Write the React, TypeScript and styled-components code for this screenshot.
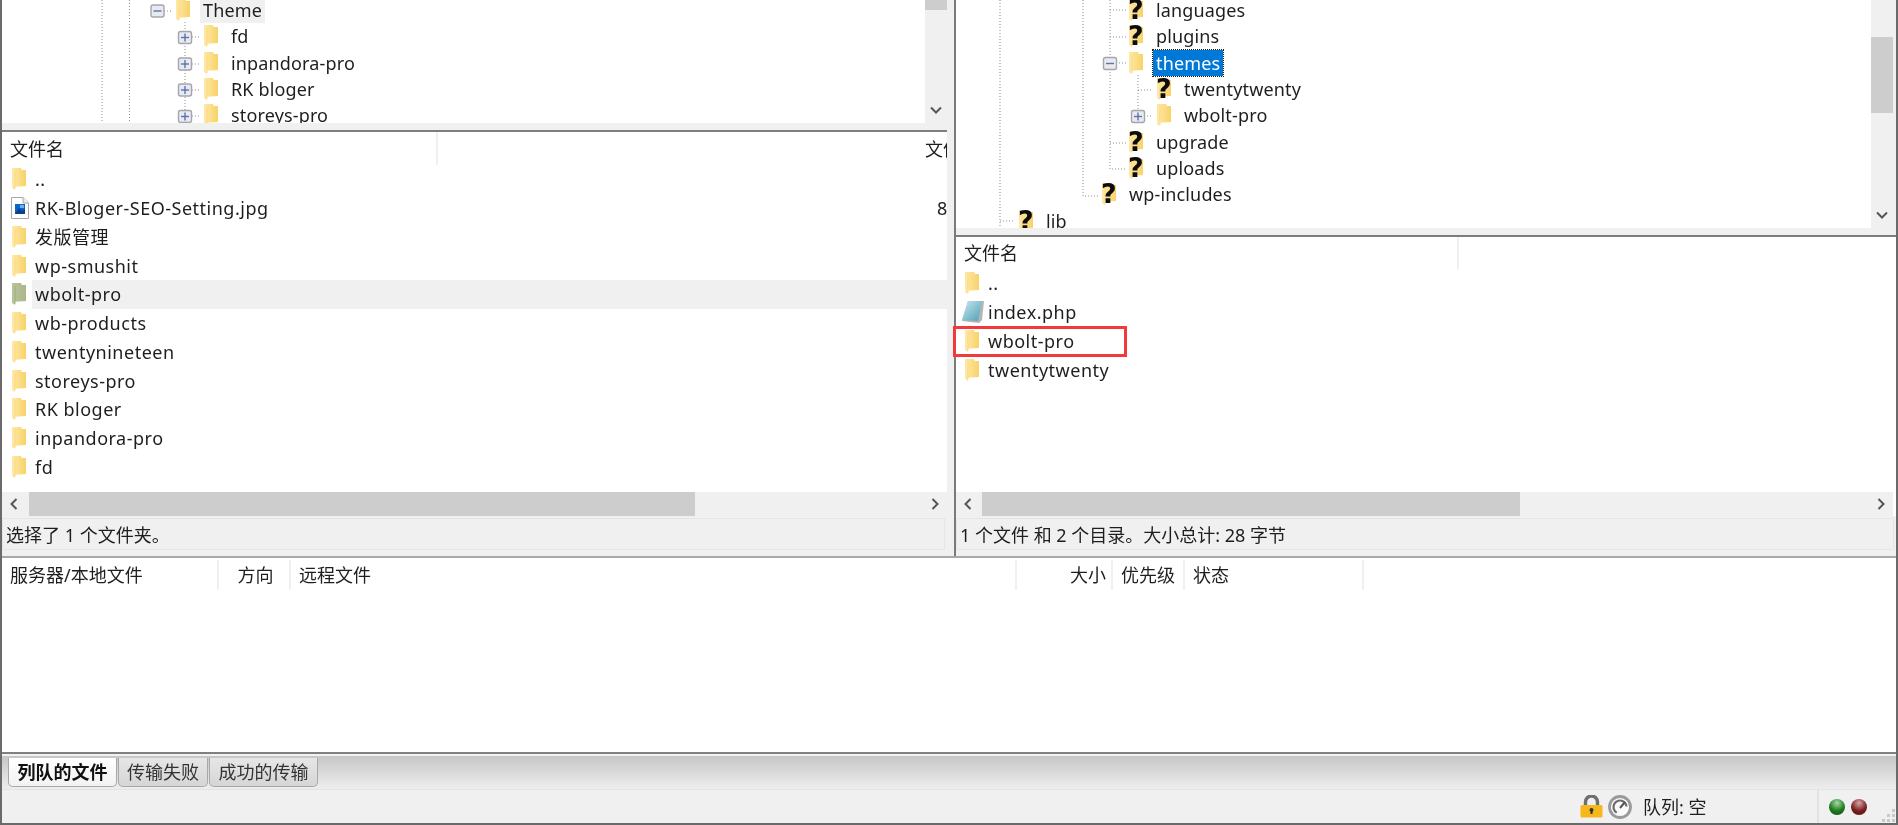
import React from "react";
import styled, { createGlobalStyle } from "styled-components";

const FONT = `"Noto Sans", "Noto Sans CJK SC", sans-serif`;

const Global = createGlobalStyle`
  html, body { margin: 0; padding: 0; background: #f0f0f0; }
  * { box-sizing: border-box; }
`;

const Window = styled.div`
  width: 1898px;
  height: 825px;
  display: flex;
  flex-direction: column;
  overflow: hidden;
  background: #f0f0f0;
  border-left: 2px solid #6a6a6a;
  border-right: 2px solid #6a6a6a;
  border-bottom: 2px solid #6a6a6a;
  font: 18px/1 ${FONT};
  color: #1e1e1e;
  filter: blur(0.45px);
`;

const Panes = styled.div`
  height: 556px;
  flex: none;
  display: grid;
  grid-template-columns: 945px 1fr;
  column-gap: 7px;
`;

const Side = styled.div<{ $divider?: boolean }>`
  display: flex;
  flex-direction: column;
  min-width: 0;
  border-left: ${(p) => (p.$divider ? "2px solid #7a7a7a" : "0")};
`;

const TreePane = styled.div<{ $h: number }>`
  height: ${(p) => p.$h}px;
  flex: none;
  display: flex;
  overflow: hidden;
  background: #fff;
`;

const TreeBody = styled.div`
  position: relative;
  flex: 1;
  min-width: 0;
  overflow: hidden;
`;

const TreeLines = styled.svg`
  position: absolute;
  inset: 0;
  width: 100%;
  height: 100%;
`;

const TreeList = styled.div`
  position: relative;
  margin-top: -3px;
`;

const TreeRow = styled.div<{ $x: number }>`
  height: 26.33px;
  display: flex;
  align-items: center;
  padding-left: ${(p) => p.$x}px;
`;

const TreeLabel = styled.span<{ $state?: "selected" | "soft" }>`
  margin-left: 10px;
  padding: 0 3px;
  height: 26px;
  display: flex;
  align-items: center;
  letter-spacing: 0.15px;
  background: ${(p) =>
    p.$state === "selected" ? "#0078d7" : p.$state === "soft" ? "#f0f0f0" : "transparent"};
  color: ${(p) => (p.$state === "selected" ? "#fff" : "inherit")};
  outline: ${(p) => (p.$state === "selected" ? "1px dotted #1a1a1a" : "none")};
`;

const IconBox = styled.span`
  position: relative;
  flex: none;
  width: 14px;
  height: 22px;
  display: block;
`;

const Question = styled.span`
  position: absolute;
  left: -1px;
  top: -3px;
  font: 700 27px/27px "DejaVu Sans", "Liberation Sans", sans-serif;
  color: #0c0c0c;
`;

const VScroll = styled.div<{ $w: number; $pad: number; $thumbTop: number; $thumbH: number }>`
  position: relative;
  flex: none;
  width: ${(p) => p.$w}px;
  background: #f0f0f0;
  &::before {
    content: "";
    position: absolute;
    left: 0;
    width: ${(p) => p.$w - p.$pad}px;
    top: ${(p) => p.$thumbTop}px;
    height: ${(p) => p.$thumbH}px;
    background: #cdcdcd;
  }
`;

const ArrowSlot = styled.span<{ $bottom: number; $w: number }>`
  position: absolute;
  left: 0;
  width: ${(p) => p.$w}px;
  bottom: ${(p) => p.$bottom}px;
  display: flex;
  justify-content: center;
`;

const Sash = styled.div`
  height: 9px;
  flex: none;
  background: #f0f0f0;
  border-bottom: 2px solid #7d7d7d;
`;

const ListPane = styled.div`
  flex: 1;
  min-height: 0;
  display: flex;
  flex-direction: column;
  background: #fff;
`;

const ListHeader = styled.div<{ $h: number }>`
  height: ${(p) => p.$h}px;
  flex: none;
  display: flex;
  align-items: center;
  white-space: nowrap;
  overflow: hidden;
`;

const NameHead = styled.div<{ $w: number }>`
  width: ${(p) => p.$w}px;
  flex: none;
  height: 100%;
  padding-left: 8px;
  display: flex;
  align-items: center;
  border-right: 2px solid #f0f0f0;
`;

const SizeHead = styled.div`
  padding-left: 487px;
`;

const ListRow = styled.div<{ $x: number }>`
  height: 28.75px;
  flex: 1;
  display: flex;
  align-items: center;
  padding-left: ${(p) => p.$x}px;
  white-space: nowrap;
  overflow: hidden;
`;

const FileLabel = styled.span<{ $active?: boolean }>`
  flex: 1;
  min-width: 0;
  height: 100%;
  display: flex;
  align-items: center;
  padding-left: 3px;
  margin-left: 6px;
  letter-spacing: 0.5px;
  background: ${(p) => (p.$active ? "#f0f0f0" : "transparent")};
`;

const SizeCell = styled.span`
  position: absolute;
  right: 0;
  width: 10px;
  overflow: hidden;
`;

const RowHost = styled.div`
  position: relative;
  display: flex;
  align-items: center;
`;

const Rows = styled.div`
  flex: 1;
  min-height: 0;
  position: relative;
`;

const HighlightBox = styled.div`
  position: absolute;
  left: -3px;
  top: 57px;
  width: 174px;
  height: 31px;
  border: 3px solid #f33a3a;
`;

const HScroll = styled.div<{ $thumbStart: number; $thumbW: number; $pad: number }>`
  position: relative;
  height: 24px;
  flex: none;
  margin-right: ${(p) => p.$pad}px;
  background: #f0f0f0;
  display: flex;
  align-items: center;
  justify-content: space-between;
  padding: 0 8px;
  &::before {
    content: "";
    position: absolute;
    top: 0;
    bottom: 0;
    left: ${(p) => p.$thumbStart}px;
    width: ${(p) => p.$thumbW}px;
    background: #cdcdcd;
  }
`;

const PaneStatus = styled.div`
  height: 32px;
  margin-top: 2px;
  margin-right: 2px;
  flex: none;
  display: flex;
  align-items: center;
  padding: 1px 0 0 3px;
  background: #f0f0f0;
  border: 1px solid #e6e6e6;
  white-space: nowrap;
`;

const PaneFoot = styled.div`
  height: 6px;
  flex: none;
  background: #f0f0f0;
`;

const Queue = styled.div`
  height: 198px;
  flex: none;
  background: #fff;
  border-top: 2px solid #a8a8a8;
  border-bottom: 2px solid #808080;
  padding-top: 2px;
`;

const QueueHead = styled.div`
  height: 30px;
  display: grid;
  grid-template-columns: 217px 72px 726px 96px 72px 179px;
  align-items: stretch;
`;

const QueueCol = styled.div<{ $align?: "center" | "flex-end" }>`
  display: flex;
  align-items: center;
  justify-content: ${(p) => p.$align ?? "flex-start"};
  padding: 0 5px 0 8px;
  border-right: 2px solid #f0f0f0;
  white-space: nowrap;
`;

const TabBand = styled.div`
  height: 36px;
  flex: none;
  display: flex;
  align-items: flex-start;
  gap: 1px;
  padding: 2px 0 0 6px;
  border-top: 2px solid #f2f2f2;
  border-bottom: 1px solid #e4e4e4;
  background: linear-gradient(#c6c6c6, #eeeeee);
`;

const Tab = styled.div<{ $active?: boolean; $w: number }>`
  width: ${(p) => p.$w}px;
  height: 29px;
  display: flex;
  align-items: center;
  justify-content: center;
  border: 1px solid #a8a8a8;
  border-top: 0;
  border-radius: 0 0 5px 5px;
  font-weight: ${(p) => (p.$active ? 700 : 400)};
  color: ${(p) => (p.$active ? "#111" : "#333")};
  background: ${(p) =>
    p.$active ? "linear-gradient(#ffffff, #f2f2f2)" : "linear-gradient(#e6e6e6, #d6d6d6)"};
`;

const StatusBar = styled.div`
  flex: 1;
  min-height: 0;
  display: flex;
  align-items: center;
  background: #f0f0f0;
`;

const LockSlot = styled.span`
  margin-left: auto;
  display: flex;
  align-items: center;
  gap: 5px;
`;

const QueueText = styled.span`
  width: 174px;
  margin-left: 11px;
  white-space: nowrap;
`;

const Lights = styled.div`
  height: 100%;
  display: flex;
  align-items: center;
  gap: 6px;
  padding: 0 14px 0 10px;
  border-left: 2px solid #e2e2e2;
`;

const Led = styled.span<{ $hue: "green" | "red" }>`
  width: 16px;
  height: 16px;
  border-radius: 50%;
  background: ${(p) =>
    p.$hue === "green"
      ? "radial-gradient(circle at 50% 25%, #a6d8a6, #1f7a1f 55%, #0e4d0e)"
      : "radial-gradient(circle at 50% 25%, #d8a6a6, #7a1f1f 55%, #4d0e0e)"};
`;

const Grip = styled.svg`
  flex: none;
  align-self: flex-end;
`;

const Chevron = ({ dir }: { dir: "up" | "down" | "left" | "right" }) => {
  const d = {
    down: "M1 1.5 L6 6.5 L11 1.5",
    up: "M1 6.5 L6 1.5 L11 6.5",
    left: "M6.5 1 L1.5 6 L6.5 11",
    right: "M1.5 1 L6.5 6 L1.5 11",
  }[dir];
  const horizontal = dir === "left" || dir === "right";
  return (
    <svg
      width={horizontal ? 8 : 12}
      height={horizontal ? 12 : 8}
      viewBox={horizontal ? "0 0 8 12" : "0 0 12 8"}
      style={{ position: "relative" }}
    >
      <path d={d} fill="none" stroke="#555" strokeWidth="2" />
    </svg>
  );
};

const FolderShape = ({ tint, id }: { tint?: boolean; id: string }) => (
  <svg width="14" height="22" viewBox="0 0 14 22">
    <defs>
      <linearGradient id={id} x1="0" y1="0" x2="1" y2="0">
        <stop offset="0" stopColor={tint ? "#b9c49a" : "#ffe9a6"} />
        <stop offset="1" stopColor={tint ? "#aab68a" : "#f8d269"} />
      </linearGradient>
    </defs>
    <path d="M0 0 H9 L9.8 2 H14 V18 L3 18.8 V22 L0 20 Z" fill={`url(#${id})`} />
    <path d="M3 3 V21" stroke={tint ? "#9aa77e" : "#f7d888"} strokeWidth="0.8" />
  </svg>
);

let uid = 0;
const Folder = ({ tint }: { tint?: boolean }) => (
  <IconBox>
    <FolderShape tint={tint} id={`folder-${uid++}`} />
  </IconBox>
);

const Unknown = () => (
  <IconBox>
    <FolderShape id={`unknown-${uid++}`} />
    <Question>?</Question>
  </IconBox>
);

const ImageFile = () => (
  <IconBox>
    <svg width="18" height="22" viewBox="0 0 18 22" style={{ marginLeft: -1 }}>
      <path d="M0.5 0.5 H12 L17.5 6 V21.5 H0.5 Z" fill="#fff" stroke="#a8a8a8" />
      <path d="M12 0.5 V6 H17.5" fill="#eee" stroke="#a8a8a8" />
      <rect x="4" y="7" width="10" height="10" fill="#0b63c4" />
      <path d="M4 17 L8 11 L11 14 L14 12 V17 Z" fill="#0a3f8a" />
      <rect x="9" y="8" width="4" height="3" fill="#6ab2ee" />
    </svg>
  </IconBox>
);

const PhpFile = () => (
  <IconBox>
    <svg width="24" height="24" viewBox="0 0 24 24" style={{ marginLeft: -4, marginTop: -1 }}>
      <defs>
        <linearGradient id="php" x1="0" y1="0" x2="1" y2="1">
          <stop offset="0" stopColor="#c9e8ee" />
          <stop offset="1" stopColor="#4c9fb5" />
        </linearGradient>
      </defs>
      <path d="M7 1 H23 L21 20 L18 23 L1 21 Z" fill="#b4b4b4" />
      <path d="M7 1 H21 L17 21 L1 20 Z" fill="url(#php)" />
    </svg>
  </IconBox>
);

const Expander = ({ x, y, open }: { x: number; y: number; open?: boolean }) => (
  <g>
    <rect x={x - 6.5} y={y - 6} width="13" height="12" rx="2" fill="#e9e9f0" stroke="#a5a5ad" strokeWidth="1.4" />
    <path d={`M${x - 4} ${y} H${x + 4}`} stroke="#5a74ad" strokeWidth="1.4" />
    {!open && <path d={`M${x} ${y - 4} V${y + 4}`} stroke="#5a74ad" strokeWidth="1.4" />}
  </g>
);

const Dots = ({ d }: { d: string }) => (
  <path d={d} fill="none" stroke="#8f8f8f" strokeWidth="1" strokeDasharray="1 2" />
);

const leftTree: { label: string; x: number; state?: "soft" }[] = [
  { label: "Theme", x: 174, state: "soft" },
  { label: "fd", x: 202 },
  { label: "inpandora-pro", x: 202 },
  { label: "RK bloger", x: 202 },
  { label: "storeys-pro", x: 202 },
];

const rightTree: { label: string; x: number; unknown?: boolean; state?: "selected" }[] = [
  { label: "languages", x: 173, unknown: true },
  { label: "plugins", x: 173, unknown: true },
  { label: "themes", x: 173, state: "selected" },
  { label: "twentytwenty", x: 201, unknown: true },
  { label: "wbolt-pro", x: 201 },
  { label: "upgrade", x: 173, unknown: true },
  { label: "uploads", x: 173, unknown: true },
  { label: "wp-includes", x: 146, unknown: true },
  { label: "lib", x: 63, unknown: true },
];

const leftFiles = [
  "..",
  "RK-Bloger-SEO-Setting.jpg",
  "发版管理",
  "wp-smushit",
  "wbolt-pro",
  "wb-products",
  "twentynineteen",
  "storeys-pro",
  "RK bloger",
  "inpandora-pro",
  "fd",
];

export default function App() {
  return (
    <>
      <Global />
      <Window>
        <Panes>
          <Side>
            <TreePane $h={123}>
              <TreeBody>
                <TreeLines viewBox="2 0 923 123" preserveAspectRatio="xMinYMin">
                  <Dots d="M102 0 V123 M129.5 0 V123 M185 22 V123" />
                  <Dots d="M164 11 H173 M192 37 H200 M192 64 H200 M192 90 H200 M192 116 H200" />
                  <Expander x={157.5} y={11} open />
                  <Expander x={185} y={37.5} />
                  <Expander x={185} y={64} />
                  <Expander x={185} y={90} />
                  <Expander x={185} y={116.5} />
                </TreeLines>
                <TreeList>
                  {leftTree.map((r) => (
                    <TreeRow key={r.label} $x={r.x}>
                      <Folder />
                      <TreeLabel $state={r.state}>{r.label}</TreeLabel>
                    </TreeRow>
                  ))}
                </TreeList>
              </TreeBody>
              <VScroll $w={22} $pad={0} $thumbTop={0} $thumbH={10}>
                <ArrowSlot $bottom={9} $w={22}>
                  <Chevron dir="down" />
                </ArrowSlot>
              </VScroll>
            </TreePane>
            <Sash />
            <ListPane>
              <ListHeader $h={33}>
                <NameHead $w={436}>文件名</NameHead>
                <SizeHead>文件大小</SizeHead>
              </ListHeader>
              <Rows>
                {leftFiles.map((name) => (
                  <RowHost key={name}>
                    <ListRow $x={10}>
                      {name.endsWith(".jpg") ? <ImageFile /> : <Folder tint={name === "wbolt-pro"} />}
                      <FileLabel $active={name === "wbolt-pro"}>{name}</FileLabel>
                    </ListRow>
                    {name.endsWith(".jpg") && <SizeCell>8</SizeCell>}
                  </RowHost>
                ))}
              </Rows>
              <HScroll $thumbStart={27} $thumbW={666} $pad={0}>
                <Chevron dir="left" />
                <Chevron dir="right" />
              </HScroll>
            </ListPane>
            <PaneStatus>选择了 1 个文件夹。</PaneStatus>
            <PaneFoot />
          </Side>
          <Side $divider>
            <TreePane $h={228}>
              <TreeBody>
                <TreeLines viewBox="956 0 915 228" preserveAspectRatio="xMinYMin">
                  <Dots d="M1000 0 V228 M1083 0 V196 H1098 M1110 0 V169 H1127 M1000 221 H1015" />
                  <Dots d="M1110 10 H1127 M1110 37 H1127 M1116 63 H1126 M1138 75 V116 M1138 90 H1153 M1144 116 H1153 M1110 143 H1127" />
                  <Expander x={1110} y={63.5} open />
                  <Expander x={1138} y={116.5} />
                </TreeLines>
                <TreeList>
                  {rightTree.map((r) => (
                    <TreeRow key={r.label} $x={r.x}>
                      {r.unknown ? <Unknown /> : <Folder />}
                      <TreeLabel $state={r.state}>{r.label}</TreeLabel>
                    </TreeRow>
                  ))}
                </TreeList>
              </TreeBody>
              <VScroll $w={25} $pad={3} $thumbTop={37} $thumbH={76}>
                <ArrowSlot $bottom={9} $w={22}>
                  <Chevron dir="down" />
                </ArrowSlot>
              </VScroll>
            </TreePane>
            <Sash />
            <ListPane>
              <ListHeader $h={32}>
                <NameHead $w={503}>文件名</NameHead>
              </ListHeader>
              <Rows>
                <ListRow $x={9}>
                  <Folder />
                  <FileLabel>..</FileLabel>
                </ListRow>
                <ListRow $x={9}>
                  <PhpFile />
                  <FileLabel>index.php</FileLabel>
                </ListRow>
                <ListRow $x={9}>
                  <Folder />
                  <FileLabel>wbolt-pro</FileLabel>
                </ListRow>
                <ListRow $x={9}>
                  <Folder />
                  <FileLabel>twentytwenty</FileLabel>
                </ListRow>
                <HighlightBox />
              </Rows>
              <HScroll $thumbStart={26} $thumbW={538} $pad={3}>
                <Chevron dir="left" />
                <Chevron dir="right" />
              </HScroll>
            </ListPane>
            <PaneStatus>1 个文件 和 2 个目录。大小总计: 28 字节</PaneStatus>
            <PaneFoot />
          </Side>
        </Panes>
        <Queue>
          <QueueHead>
            <QueueCol>服务器/本地文件</QueueCol>
            <QueueCol $align="center">方向</QueueCol>
            <QueueCol>远程文件</QueueCol>
            <QueueCol $align="flex-end">大小</QueueCol>
            <QueueCol>优先级</QueueCol>
            <QueueCol>状态</QueueCol>
          </QueueHead>
        </Queue>
        <TabBand>
          <Tab $active $w={109}>列队的文件</Tab>
          <Tab $w={90}>传输失败</Tab>
          <Tab $w={109}>成功的传输</Tab>
        </TabBand>
        <StatusBar>
          <LockSlot>
            <svg width="23" height="23" viewBox="0 0 23 23">
              <path d="M5.5 11 V7 a6 6 0 0 1 12 0 V11" fill="none" stroke="#6f6f6f" strokeWidth="3.4" />
              <rect x="0.5" y="10" width="22" height="12.5" rx="1.5" fill="#f6b71a" />
              <circle cx="11.5" cy="15" r="2" fill="#333" />
              <rect x="10.5" y="15" width="2" height="4" fill="#333" />
            </svg>
            <svg width="24" height="24" viewBox="0 0 24 24">
              <circle cx="12" cy="12" r="10.5" fill="#fafafa" stroke="#9a9a9a" strokeWidth="2.8" />
              <circle cx="12" cy="12" r="6.5" fill="none" stroke="#6a6a6a" strokeWidth="2.2" strokeDasharray="26 15" transform="rotate(120 12 12)" />
              <path d="M12 13 L17 7" stroke="#555" strokeWidth="2" />
            </svg>
          </LockSlot>
          <QueueText>队列: 空</QueueText>
          <Lights>
            <Led $hue="green" />
            <Led $hue="red" />
          </Lights>
          <Grip width="15" height="15" viewBox="0 0 15 15">
            <path d="M11 1 h3 v3 h-3z M6 6 h3 v3 h-3z M11 6 h3 v3 h-3z M1 11 h3 v3 h-3z M6 11 h3 v3 h-3z M11 11 h3 v3 h-3z" fill="#c9c9c9" />
          </Grip>
        </StatusBar>
      </Window>
    </>
  );
}
